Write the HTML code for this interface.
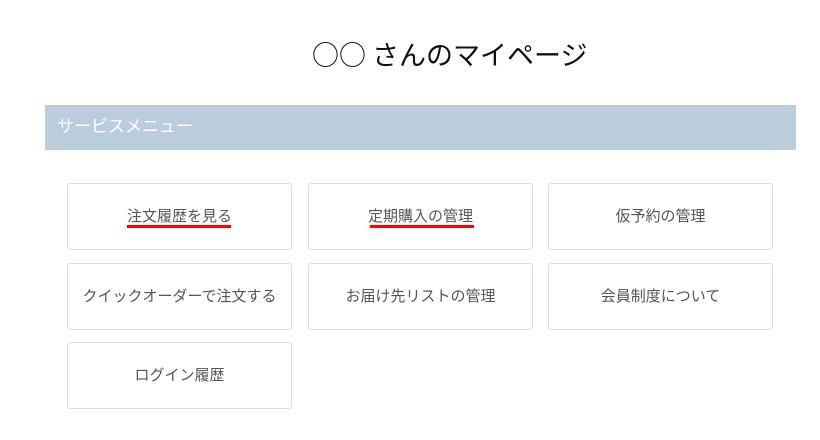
<!DOCTYPE html>
<html><head><meta charset="utf-8"><style>
body{margin:0;width:820px;height:440px;background:#fff;font-family:"Liberation Sans","Noto Sans CJK JP",sans-serif;position:relative;overflow:hidden}
h1{position:absolute;left:312px;top:34px;margin:0;font-weight:normal;font-size:27px;color:#111;line-height:40px;font-family:"Noto Sans CJK JP",sans-serif;white-space:nowrap}
.band{position:absolute;left:45px;top:105px;width:751px;height:45px;background:#bbccdd;color:#fff;font-size:17px;line-height:44px;padding-left:12px;box-sizing:border-box}
.c{position:absolute;width:225px;height:67px;border:1px solid #ddd;border-radius:3px;box-sizing:border-box;text-align:center;line-height:65px;font-size:15px;color:#555}
.u{position:absolute;height:3px;background:#f00;top:225px}
</style></head><body>
<h1>○○ さんのマイページ</h1>
<div class="band">サービスメニュー</div>
<div class="c" style="left:67px;top:183px">注文履歴を見る</div>
<div class="c" style="left:308px;top:183px">定期購入の管理</div>
<div class="c" style="left:548px;top:183px">仮予約の管理</div>
<div class="c" style="left:67px;top:263px">クイックオーダーで注文する</div>
<div class="c" style="left:308px;top:263px">お届け先リストの管理</div>
<div class="c" style="left:548px;top:263px">会員制度について</div>
<div class="c" style="left:67px;top:342px">ログイン履歴</div>
<div class="u" style="left:127px;width:104px"></div>
<div class="u" style="left:370px;width:104px"></div>
</body></html>
